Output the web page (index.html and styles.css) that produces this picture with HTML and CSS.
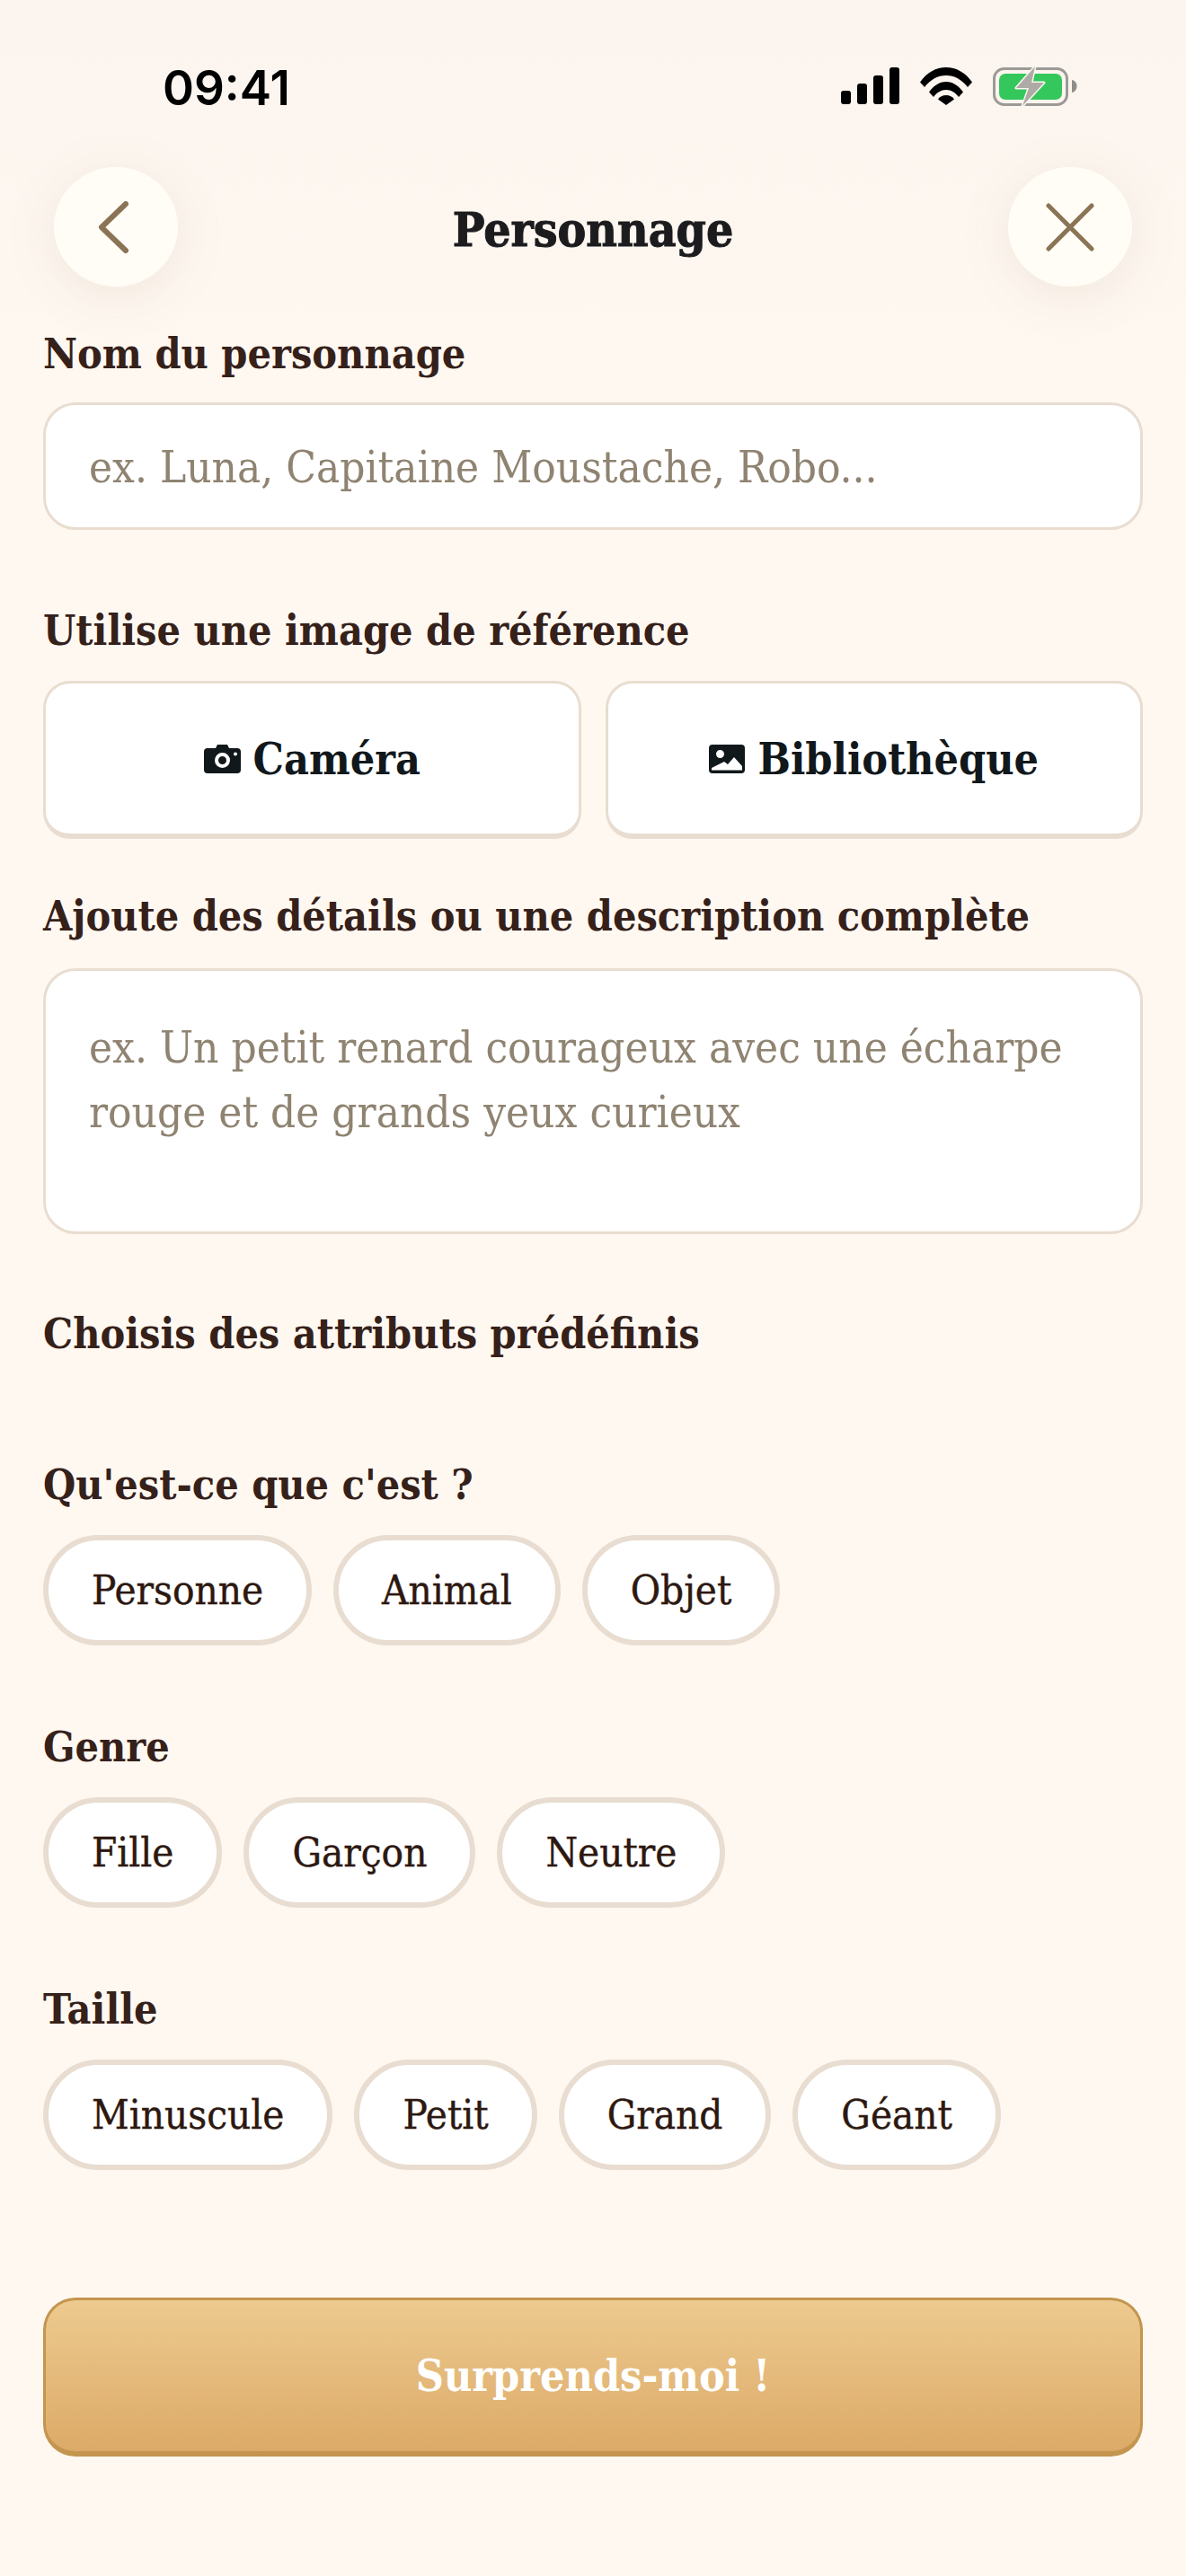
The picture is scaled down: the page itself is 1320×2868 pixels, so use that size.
FILE: index.html
```html
<!DOCTYPE html>
<html lang="fr">
<head>
<meta charset="utf-8">
<title>Personnage</title>
<link rel="stylesheet" href="styles.css">
</head>
<body>
<div class="screen">
  <div class="status">
    <span class="time">09:41</span>
    <div class="status-icons">
      <svg class="signal" width="65" height="41" viewBox="0 0 65 41"><rect x="0" y="26" width="11" height="15" rx="3"/><rect x="18" y="18" width="11" height="23" rx="3"/><rect x="36" y="9" width="11" height="32" rx="3"/><rect x="54" y="0" width="11" height="41" rx="3"/></svg>
      <svg class="wifi" width="58" height="42" viewBox="0 0 58 42"><path d="M0 16.500C7.500 5.500 18 0 29 0s21.500 5.500 29 16.500l-5 5.500C46.500 13.500 38 9 29 9s-17.500 4.500-24 13z"/><path d="M10 27.500C15 20.500 21.500 16 29 16s14 4.500 19 11.500l-5 5.500c-3.500-5-8.500-8-14-8s-10.500 3-14 8z"/><path d="M20 35.500c2-3 5-4.500 9-4.500s7 1.500 9 4.500L29 42z"/></svg>
      <svg class="battery" width="94" height="44" viewBox="0 0 94 44"><rect x="1.500" y="2.500" width="81" height="40" rx="11" fill="none" stroke="#9c9a96" stroke-width="3"/><rect x="7" y="8" width="70" height="29" rx="7" fill="#34c85c"/><path d="M88 15c3 .5 5.500 3 5.500 7s-2.500 6.500-5.500 7z" fill="#8f8d8a"/><path d="M47 0 26 24h14l-7 20 24-26H43z" fill="#aeaaa6" stroke="#fdf6f0" stroke-width="3" stroke-linejoin="round" paint-order="stroke"/></svg>
    </div>
  </div>

  <header class="topbar">
    <button class="round-btn"><svg class="chevron" width="36" height="58" viewBox="0 0 36 58"><path d="M32 3 5 29l27 26" fill="none" stroke="#8b7355" stroke-width="6" stroke-linecap="round" stroke-linejoin="round"/></svg></button>
    <h1 class="title">Personnage</h1>
    <button class="round-btn"><svg width="54" height="54" viewBox="0 0 54 54"><path d="M3 3l48 48M51 3 3 51" fill="none" stroke="#8b7355" stroke-width="5" stroke-linecap="round"/></svg></button>
  </header>

  <main class="form">
    <label class="label">Nom du personnage</label>
    <div class="field field-name">ex. Luna, Capitaine Moustache, Robo...</div>

    <label class="label label-image">Utilise une image de référence</label>
    <div class="source-row">
      <button class="source-btn">
        <svg width="41" height="32" viewBox="0 0 41 32"><path fill-rule="evenodd" d="M13 4 15 0h11l2 4h9a4 4 0 0 1 4 4v20a4 4 0 0 1-4 4H4a4 4 0 0 1-4-4V8a4 4 0 0 1 4-4zM20.500 9a8.500 8.500 0 1 0 0 17 8.500 8.500 0 0 0 0-17zm0 4a4.500 4.500 0 1 1 0 9 4.500 4.500 0 0 1 0-9zM35 8.500a2 2 0 1 0 0 4 2 2 0 0 0 0-4z" fill="#11181c"/></svg>
        <span>Caméra</span>
      </button>
      <button class="source-btn">
        <svg width="40" height="32" viewBox="0 0 40 32"><path fill-rule="evenodd" d="M4 0h32a4 4 0 0 1 4 4v24a4 4 0 0 1-4 4H4a4 4 0 0 1-4-4V4a4 4 0 0 1 4-4zm8.500 6a4.500 4.500 0 1 0 0 9 4.500 4.500 0 0 0 0-9zM3 28.500h34V24l-9-10-7 8-4-3-14 7z" fill="#11181c"/></svg>
        <span>Bibliothèque</span>
      </button>
    </div>

    <label class="label label-details">Ajoute des détails ou une description complète</label>
    <div class="field field-details">ex. Un petit renard courageux avec une écharpe rouge et de grands yeux curieux</div>

    <p class="label label-attrs">Choisis des attributs prédéfinis</p>

    <p class="label label-group-first">Qu'est-ce que c'est ?</p>
    <div class="chips"><span class="chip">Personne</span><span class="chip">Animal</span><span class="chip">Objet</span></div>

    <p class="label label-group">Genre</p>
    <div class="chips"><span class="chip">Fille</span><span class="chip">Garçon</span><span class="chip">Neutre</span></div>

    <p class="label label-group">Taille</p>
    <div class="chips"><span class="chip">Minuscule</span><span class="chip">Petit</span><span class="chip">Grand</span><span class="chip">Géant</span></div>

    <button class="surprise">Surprends-moi !</button>
  </main>
</div>
</body>
</html>
```
FILE: styles.css
```css
* { box-sizing: border-box; }
html, body { margin: 0; padding: 0; }
body {
  width: 1320px;
  height: 2868px;
  overflow: hidden;
  background: #fff8f1;
  font-family: "DejaVu Serif Condensed", "DejaVu Serif", serif;
  color: #35211a;
}
.screen {
  height: 2868px;
  background: linear-gradient(180deg, #fcf5ef 0, #fff8f1 420px);
}
.status {
  height: 186px;
  padding: 70px 121px 0 181px;
  display: flex;
  justify-content: space-between;
  align-items: flex-start;
}
.time {
  font-family: Inter, "Liberation Sans", sans-serif;
  font-weight: 600;
  font-size: 53px;
  line-height: 56px;
  color: #000;
}
.status-icons {
  display: flex;
  align-items: flex-start;
  gap: 23px;
  padding-top: 5px;
}
.battery { margin-top: -1px; }
.topbar {
  height: 133px;
  padding: 0 60px;
  display: flex;
  align-items: center;
  justify-content: space-between;
}
.round-btn {
  width: 138px;
  height: 133px;
  padding: 0;
  border: 0;
  border-radius: 50%;
  background: #fffdf6;
  box-shadow: 0 10px 60px rgba(120, 100, 60, .1);
  display: flex;
  align-items: center;
  justify-content: center;
}
.chevron { margin-right: 7px; }
.title {
  margin: 4px 0 0;
  font-size: 53px;
  line-height: 60px;
  font-weight: 700;
  color: #1c1c1e;
  -webkit-text-stroke: 1px #1c1c1e;
}
.form { padding: 45px 48px 0; }
.label {
  display: block;
  margin: 0;
  font-size: 46.3px;
  line-height: 60px;
  font-weight: 700;
  color: #35211a;
}
.field {
  background: #fff;
  border: 3px solid #e8ddd0;
  border-radius: 36px;
  color: #8f8371;
  font-size: 49px;
  padding: 0 48px;
}
.field-name {
  margin-top: 24px;
  height: 142px;
  line-height: 140px;
}
.label-image { margin-top: 82px; }
.source-row {
  margin-top: 26px;
  display: flex;
  gap: 27px;
}
.source-btn {
  flex: 1;
  height: 176px;
  padding: 0;
  background: #fff;
  border: solid #e8ddd0;
  border-width: 3px 3px 6px;
  border-radius: 30px;
  display: flex;
  align-items: center;
  justify-content: center;
  gap: 14px;
  font: inherit;
  font-size: 48px;
  font-weight: 700;
  color: #11181c;
}
.label-details { margin-top: 56px; }
.field-details {
  margin-top: 28px;
  height: 296px;
  padding-top: 50px;
  line-height: 72px;
}
.label-attrs { margin-top: 81px; }
.label-group-first { margin-top: 108px; }
.label-group { margin-top: 83px; }
.chips {
  margin-top: 26px;
  display: flex;
  gap: 24px;
}
.chip {
  height: 123px;
  padding: 0 48px;
  background: #fff;
  border: 6px solid #e8ddd0;
  border-radius: 62px;
  display: flex;
  align-items: center;
  font-size: 45.300px;
  font-weight: 400;
  color: #2d1810;
  -webkit-text-stroke: .4px #2d1810;
}
.surprise {
  display: block;
  width: 100%;
  height: 177px;
  margin-top: 142px;
  border: solid #c4954f;
  border-width: 3px 3px 6px;
  border-radius: 36px;
  background: linear-gradient(180deg, #edca8f, #dcaa68);
  color: #fff;
  font: inherit;
  font-size: 48px;
  font-weight: 700;
}
```
